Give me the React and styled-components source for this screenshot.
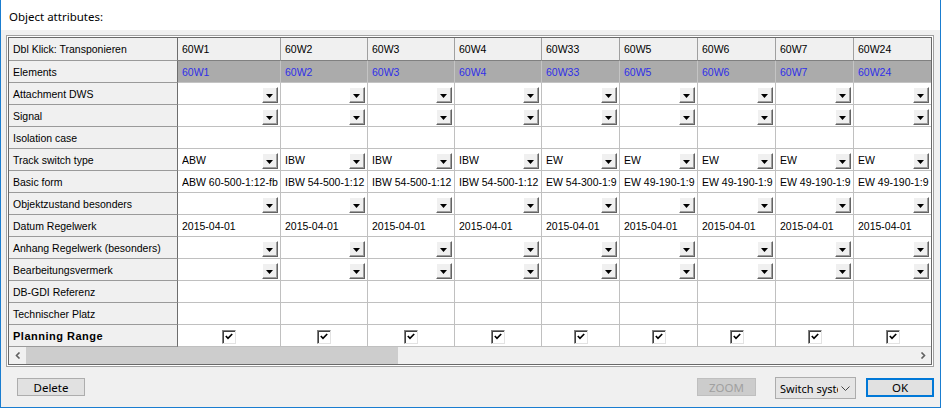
import React from 'react';
import styled, { createGlobalStyle } from 'styled-components';

const GlobalStyle = createGlobalStyle`
  body {
    margin: 0;
    background: #ffffff;
  }
`;

const columns = [
  { id: '60W1', width: 103, track: 'ABW', form: 'ABW 60-500-1:12-fb' },
  { id: '60W2', width: 87, track: 'IBW', form: 'IBW 54-500-1:12' },
  { id: '60W3', width: 87, track: 'IBW', form: 'IBW 54-500-1:12' },
  { id: '60W4', width: 87, track: 'IBW', form: 'IBW 54-500-1:12' },
  { id: '60W33', width: 78, track: 'EW', form: 'EW 54-300-1:9' },
  { id: '60W5', width: 78, track: 'EW', form: 'EW 49-190-1:9' },
  { id: '60W6', width: 78, track: 'EW', form: 'EW 49-190-1:9' },
  { id: '60W7', width: 78, track: 'EW', form: 'EW 49-190-1:9' },
  { id: '60W24', width: 77, track: 'EW', form: 'EW 49-190-1:9' },
];

const rows = [
  { label: 'Attachment DWS', kind: 'select' },
  { label: 'Signal', kind: 'select' },
  { label: 'Isolation case', kind: 'empty' },
  { label: 'Track switch type', kind: 'select', value: (c) => c.track },
  { label: 'Basic form', kind: 'text', value: (c) => c.form },
  { label: 'Objektzustand besonders', kind: 'select' },
  { label: 'Datum Regelwerk', kind: 'text', value: () => '2015-04-01' },
  { label: 'Anhang Regelwerk (besonders)', kind: 'select' },
  { label: 'Bearbeitungsvermerk', kind: 'select' },
  { label: 'DB-GDI Referenz', kind: 'empty' },
  { label: 'Technischer Platz', kind: 'empty' },
  { label: 'Planning Range', kind: 'check', bold: true },
];

const Window = styled.div`
  width: 941px;
  height: 408px;
  box-sizing: border-box;
  border-left: 1px solid #1a7dd0;
  border-right: 1px solid #1a7dd0;
  border-bottom: 1px solid #1a7dd0;
  display: flex;
  flex-direction: column;
  background: #f0f0f0;
  font-family: 'Liberation Sans', Arial, sans-serif;
`;

const TitleBar = styled.div`
  height: 30px;
  flex: none;
  background: #ffffff;
  display: flex;
  align-items: center;
  padding: 2px 0 0 8px;
  box-sizing: border-box;
  font-family: 'Noto Sans', 'Liberation Sans', sans-serif;
  font-size: 11.5px;
  color: #000;
`;

const Body = styled.div`
  flex: 1;
  padding: 5px 6px 0 5px;
  display: flex;
  flex-direction: column;
`;

const Frame = styled.div`
  width: 928px;
  height: 332px;
  box-sizing: border-box;
  border: 1px solid #a0a0a0;
  padding: 1px;
  background: #ffffff;
`;

const Inner = styled.div`
  height: 100%;
  box-sizing: border-box;
  border: 1px solid #696969;
  display: flex;
  flex-direction: column;
`;

const Grid = styled.div`
  display: grid;
  grid-template-columns: ${(p) => p.$cols};
  grid-template-rows: 23px repeat(13, 22px);
  font-size: 10.5px;
  color: #000;
`;

const Cell = styled.div`
  box-sizing: border-box;
  display: flex;
  align-items: center;
  min-width: 0;
  overflow: hidden;
  white-space: nowrap;
`;

const LabelCell = styled(Cell)`
  background: #f0f0f0;
  padding-left: 4px;
  border-right: 1px solid #6d6d6d;
  border-bottom: 1px solid #9a9a9a;
  font-weight: ${(p) => (p.$bold ? 700 : 400)};
  font-size: ${(p) => (p.$bold ? '11px' : '10.5px')};
  letter-spacing: ${(p) => (p.$bold ? '0.5px' : '0')};
`;

const HeadCell = styled(Cell)`
  background: #f0f0f0;
  padding-left: 4px;
  border-right: ${(p) => (p.$last ? 'none' : '1px solid #a0a0a0')};
  border-bottom: 1px solid #808080;
`;

const ElementCell = styled(Cell)`
  background: #ababab;
  color: #2f2fe8;
  padding-left: 4px;
  border-right: ${(p) => (p.$last ? 'none' : '1px solid #c4c4c4')};
  border-bottom: 1px solid #c4c4c4;
`;

const DataCell = styled(Cell)`
  background: #ffffff;
  padding: 0 2px 0 4px;
  border-right: ${(p) => (p.$last ? 'none' : '1px solid #c0c0c0')};
  border-bottom: 1px solid #c0c0c0;
  justify-content: ${(p) => (p.$center ? 'center' : 'flex-start')};
`;

const CellText = styled.span`
  flex: 1;
  overflow: hidden;
`;

const DropBtn = styled.span`
  flex: none;
  align-self: flex-start;
  margin-top: 4px;
  width: 16px;
  height: 16px;
  box-sizing: border-box;
  background: #f0f0f0;
  border-top: 1px solid #ffffff;
  border-left: 1px solid #ffffff;
  border-right: 1px solid #646464;
  border-bottom: 1px solid #646464;
  box-shadow: inset -1px -1px 0 #a0a0a0;
  display: flex;
  align-items: center;
  justify-content: center;
  padding: 1px 1px 0 0;
`;

const CheckBox = styled.span`
  width: 14px;
  height: 14px;
  box-sizing: border-box;
  margin-left: -2px;
  margin-top: 2px;
  background: #ffffff;
  border: 1px solid;
  border-color: #808080 #e3e3e3 #e3e3e3 #808080;
  box-shadow: inset 1px 1px 0 #404040;
  display: flex;
  align-items: center;
  justify-content: center;
`;

const HScroll = styled.div`
  height: 17px;
  flex: none;
  display: flex;
  background: #f0f0f0;
`;

const ArrowBtn = styled.div`
  width: 17px;
  flex: none;
  display: flex;
  align-items: center;
  justify-content: center;
`;

const Thumb = styled.div`
  width: ${(p) => p.$w}px;
  background: #cdcdcd;
`;

const Track = styled.div`
  flex: 1;
`;

const Footer = styled.div`
  flex: 1;
  display: flex;
  align-items: flex-start;
  padding: 11px 0 0 11px;
  font-family: 'Noto Sans', 'Liberation Sans', sans-serif;
  font-size: 11.5px;
`;

const Button = styled.div`
  width: ${(p) => p.$w}px;
  box-sizing: border-box;
  display: flex;
  align-items: center;
  justify-content: center;
  background: ${(p) => (p.$disabled ? '#cccccc' : '#e1e1e1')};
  color: ${(p) => (p.$disabled ? '#a0a0a0' : '#000')};
  border: ${(p) =>
    p.$primary ? '2px solid #0078d7' : p.$disabled ? '1px solid #bfbfbf' : '1px solid #adadad'};
  height: ${(p) => (p.$primary ? '19px' : '18px')};
  margin-left: ${(p) => p.$gap || 0}px;
`;

const Spacer = styled.div`
  flex: 1;
`;

const SelectBox = styled.div`
  width: 81px;
  height: 22px;
  margin-top: -1px;
  margin-left: 19px;
  box-sizing: border-box;
  background: #e5e5e5;
  border: 1px solid #acacac;
  display: flex;
  align-items: center;
  padding: 0 5px 0 4px;
  gap: 3px;
  font-size: 11px;
`;

const SelectText = styled.span`
  flex: 1;
  overflow: hidden;
  white-space: nowrap;
`;

function Chevron({ dir }) {
  const d = dir === 'left' ? 'M4.5 0.5 L1.5 3.5 L4.5 6.5' : 'M1.5 0.5 L4.5 3.5 L1.5 6.5';
  return (
    <svg width="6" height="7" viewBox="0 0 6 7">
      <path d={d} fill="none" stroke="#606060" strokeWidth="1.6" />
    </svg>
  );
}

function Triangle() {
  return (
    <svg width="7" height="4" viewBox="0 0 7 4">
      <path d="M0 0 H7 L3.5 4 Z" fill="#000" />
    </svg>
  );
}

function CheckMark() {
  return (
    <svg width="8" height="7" viewBox="0 0 8 7">
      <path d="M0.8 3 L3 5.3 L7.2 1" fill="none" stroke="#000" strokeWidth="1.7" />
    </svg>
  );
}

function renderCell(row, col, last) {
  if (row.kind === 'check') {
    return (
      <DataCell key={col.id} $last={last} $center>
        <CheckBox>
          <CheckMark />
        </CheckBox>
      </DataCell>
    );
  }
  const value = row.value ? row.value(col) : '';
  return (
    <DataCell key={col.id} $last={last}>
      <CellText>{value}</CellText>
      {row.kind === 'select' && (
        <DropBtn>
          <Triangle />
        </DropBtn>
      )}
    </DataCell>
  );
}

export default function App() {
  const template = ['169px', ...columns.map((c) => c.width + 'px')].join(' ');
  const lastIndex = columns.length - 1;

  return (
    <>
      <GlobalStyle />
      <Window>
        <TitleBar>Object attributes:</TitleBar>
        <Body>
          <Frame>
            <Inner>
              <Grid $cols={template}>
                <LabelCell>Dbl Klick: Transponieren</LabelCell>
                {columns.map((c, i) => (
                  <HeadCell key={c.id} $last={i === lastIndex}>
                    {c.id}
                  </HeadCell>
                ))}
                <LabelCell>Elements</LabelCell>
                {columns.map((c, i) => (
                  <ElementCell key={c.id} $last={i === lastIndex}>
                    {c.id}
                  </ElementCell>
                ))}
                {rows.map((row) => (
                  <React.Fragment key={row.label}>
                    <LabelCell $bold={row.bold}>{row.label}</LabelCell>
                    {columns.map((c, i) => renderCell(row, c, i === lastIndex))}
                  </React.Fragment>
                ))}
              </Grid>
              <HScroll>
                <ArrowBtn>
                  <Chevron dir="left" />
                </ArrowBtn>
                <Thumb $w={372} />
                <Track />
                <ArrowBtn>
                  <Chevron dir="right" />
                </ArrowBtn>
              </HScroll>
            </Inner>
          </Frame>
          <Footer>
            <Button $w={68}>Delete</Button>
            <Spacer />
            <Button $w={59} $disabled>
              ZOOM
            </Button>
            <SelectBox>
              <SelectText>Switch system</SelectText>
              <svg width="9" height="5" viewBox="0 0 9 5">
                <path d="M0.5 0.5 L4.5 4.5 L8.5 0.5" fill="none" stroke="#444" strokeWidth="1" />
              </svg>
            </SelectBox>
            <Button $w={68} $primary $gap={10}>
              OK
            </Button>
          </Footer>
        </Body>
      </Window>
    </>
  );
}
